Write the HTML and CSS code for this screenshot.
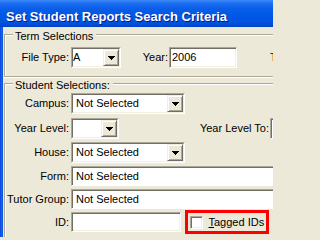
FILE: index.html
```html
<!DOCTYPE html>
<html>
<head>
<meta charset="utf-8">
<title>Set Student Reports Search Criteria</title>
<link rel="stylesheet" href="styles.css">
</head>
<body>
<div class="window">
  <div class="titlebar"><span class="title">Set Student Reports Search Criteria</span></div>
  <div class="frame">
    <div class="frame-edge"></div>
    <div class="client">
      <div class="group group-term">
        <div class="legend">Term Selections</div>
        <div class="row row-filetype">
          <span class="label">File Type:</span>
          <div class="combo combo-filetype">
            <div class="combo-in">
              <span class="combo-text text-tight">A</span>
              <span class="combo-btn"><svg class="arrow" viewBox="0 0 7 4" width="7" height="4" shape-rendering="crispEdges"><path d="M0 0h7v1H0zM1 1h5v1H1zM2 2h3v1H2zM3 3h1v1H3z" fill="#000"/></svg></span>
            </div>
          </div>
          <span class="label label-year">Year:</span>
          <div class="edit edit-year">2006</div>
          <span class="stub">To</span>
        </div>
      </div>

      <div class="group group-student">
        <div class="legend">Student Selections:</div>

        <div class="row row-campus">
          <span class="label">Campus:</span>
          <div class="combo combo-wide">
            <div class="combo-in">
              <span class="combo-text">Not Selected</span>
              <span class="combo-btn"><svg class="arrow" viewBox="0 0 7 4" width="7" height="4" shape-rendering="crispEdges"><path d="M0 0h7v1H0zM1 1h5v1H1zM2 2h3v1H2zM3 3h1v1H3z" fill="#000"/></svg></span>
            </div>
          </div>
        </div>

        <div class="row row-yearlevel">
          <span class="label">Year Level:</span>
          <div class="combo combo-small">
            <div class="combo-in">
              <span class="combo-text"></span>
              <span class="combo-btn"><svg class="arrow" viewBox="0 0 7 4" width="7" height="4" shape-rendering="crispEdges"><path d="M0 0h7v1H0zM1 1h5v1H1zM2 2h3v1H2zM3 3h1v1H3z" fill="#000"/></svg></span>
            </div>
          </div>
          <span class="label label-ylto">Year Level To:</span>
          <div class="combo-cut"></div>
        </div>

        <div class="row row-house">
          <span class="label">House:</span>
          <div class="combo combo-wide">
            <div class="combo-in">
              <span class="combo-text">Not Selected</span>
              <span class="combo-btn"><svg class="arrow" viewBox="0 0 7 4" width="7" height="4" shape-rendering="crispEdges"><path d="M0 0h7v1H0zM1 1h5v1H1zM2 2h3v1H2zM3 3h1v1H3z" fill="#000"/></svg></span>
            </div>
          </div>
        </div>

        <div class="row row-form">
          <span class="label">Form:</span>
          <div class="edit edit-long">Not Selected</div>
        </div>

        <div class="row row-tutor">
          <span class="label">Tutor Group:</span>
          <div class="edit edit-long">Not Selected</div>
        </div>

        <div class="row row-id">
          <span class="label">ID:</span>
          <div class="edit edit-id"></div>
          <div class="tagged">
            <span class="check"></span>
            <span class="tagged-text"><u>T</u>agged IDs</span>
          </div>
        </div>
      </div>
    </div>
  </div>
</div>
</body>
</html>
```
FILE: styles.css
```css
html, body {
  margin: 0;
  padding: 0;
  overflow: hidden;
}

body {
  background: #ECE9D8;
  font-family: "Liberation Sans", Arial, sans-serif;
  font-size: 11px;
  color: #000;
}

.window {
  width: 273px;
  height: 237px;
  overflow: hidden;
}

.titlebar {
  height: 27px;
  box-sizing: border-box;
  padding: 9px 0 0 6px;
  background: linear-gradient(to bottom,
    #3D8AF7 0px,
    #1E6FF1 3px,
    #0B5FE9 8px,
    #0058E6 15px,
    #0055E2 21px,
    #004BD4 25px,
    #0040C2 27px);
}

.title {
  display: block;
  font-weight: bold;
  font-size: 13px;
  line-height: 15px;
  color: #fff;
  text-shadow: 1px 1px #0A1883;
  white-space: nowrap;
}

.frame {
  display: flex;
  height: 210px;
}

.frame-edge {
  flex: none;
  width: 3px;
  background: linear-gradient(to right, #0A44D6, #1661EC 50%, #0A52E0);
}

.client {
  flex: 1;
  min-width: 0;
  padding: 7px 0 0 1px;
}

.group {
  display: flex;
  flex-direction: column;
  border: 1px solid #ACA899;
  border-right: 0;
}

.group-term {
  padding-bottom: 8px;
  box-shadow: inset 1px 1px #fff, 0 1px #fff;
}

.group-student {
  margin-top: 6px;
  padding-bottom: 3px;
  border-bottom: 0;
  box-shadow: inset 1px 1px #fff;
}

.legend {
  width: max-content;
  margin: -5px 0 0 8px;
  padding: 0 3px 0 2px;
  background: #ECE9D8;
  line-height: 13px;
  white-space: nowrap;
}

.row {
  display: flex;
  align-items: center;
  min-width: 0;
}

.row-filetype { margin-top: 4px; }
.row-campus { margin-top: 1px; }
.row-yearlevel { margin-top: 4px; }
.row-house { margin-top: 3px; }
.row-form { margin-top: 3px; }
.row-tutor { margin-top: 3px; }
.row-id { margin-top: 1px; }

.label {
  flex: none;
  width: 64px;
  margin-right: 2px;
  text-align: right;
  line-height: 13px;
  white-space: nowrap;
}

.label-year {
  width: 47px;
  margin-right: 1px;
}

.label-ylto {
  width: 150px;
  margin-right: 1px;
}

.stub {
  flex: 1;
  min-width: 0;
  margin-left: 33px;
  line-height: 13px;
  white-space: nowrap;
  overflow: hidden;
}

/* combobox */
.combo {
  flex: none;
  display: flex;
  height: 21px;
  box-sizing: border-box;
  border: 1px solid;
  border-color: #ACA899 #fff #fff #ACA899;
}

.combo-filetype { width: 50px; }
.combo-wide { width: 114px; }
.combo-small { width: 48px; }

.combo-cut {
  flex: 1;
  min-width: 0;
  height: 21px;
  box-sizing: border-box;
  border: 1px solid;
  border-color: #ACA899 transparent #fff #ACA899;
  border-right: 0;
  box-shadow: inset 1px 1px #716F64;
  background: #fff;
}

.combo-in {
  flex: 1;
  min-width: 0;
  display: flex;
  border: 1px solid;
  border-color: #716F64 #F1EFE2 #F1EFE2 #716F64;
  background: #fff;
}

.combo-text {
  flex: 1;
  min-width: 0;
  padding-left: 3px;
  line-height: 17px;
  white-space: nowrap;
  overflow: hidden;
}

.combo-text.text-tight {
  padding-left: 0;
}

.combo-btn {
  flex: none;
  width: 16px;
  box-sizing: border-box;
  display: flex;
  align-items: center;
  justify-content: center;
  border: 1px solid;
  border-color: #F1EFE2 #716F64 #716F64 #F1EFE2;
  box-shadow: inset 1px 1px #fff, inset -1px -1px #ACA899;
  background: #ECE9D8;
}

.arrow {
  display: block;
  width: 7px;
  height: 4px;
  margin-top: 1px;
}

/* edit box */
.edit {
  flex: none;
  height: 20px;
  box-sizing: border-box;
  border: 1px solid;
  border-color: #ACA899 #fff #fff #ACA899;
  box-shadow: inset 1px 1px #716F64, inset -1px -1px #F1EFE2;
  background: #fff;
  padding-left: 4px;
  line-height: 18px;
  white-space: nowrap;
  overflow: hidden;
}

.edit-year {
  width: 68px;
  height: 21px;
  line-height: 19px;
  padding-left: 2px;
}

.edit-long {
  flex: 1;
  min-width: 0;
  border-right: 0;
  box-shadow: inset 1px 1px #716F64;
}

.edit-id { width: 110px; }

/* tagged IDs */
.tagged {
  flex: none;
  display: flex;
  align-items: center;
  box-sizing: border-box;
  width: 84px;
  height: 24px;
  margin-left: 4px;
  padding-left: 2px;
  border: 3px solid #FF0000;
  line-height: 13px;
  white-space: nowrap;
}

.check {
  flex: none;
  width: 13px;
  height: 13px;
  box-sizing: border-box;
  border: 1px solid;
  border-color: #ACA899 #fff #fff #ACA899;
  box-shadow: inset 1px 1px #716F64, inset -1px -1px #F1EFE2;
  background: #fff;
}

.tagged-text {
  margin-left: 5.5px;
}
```
